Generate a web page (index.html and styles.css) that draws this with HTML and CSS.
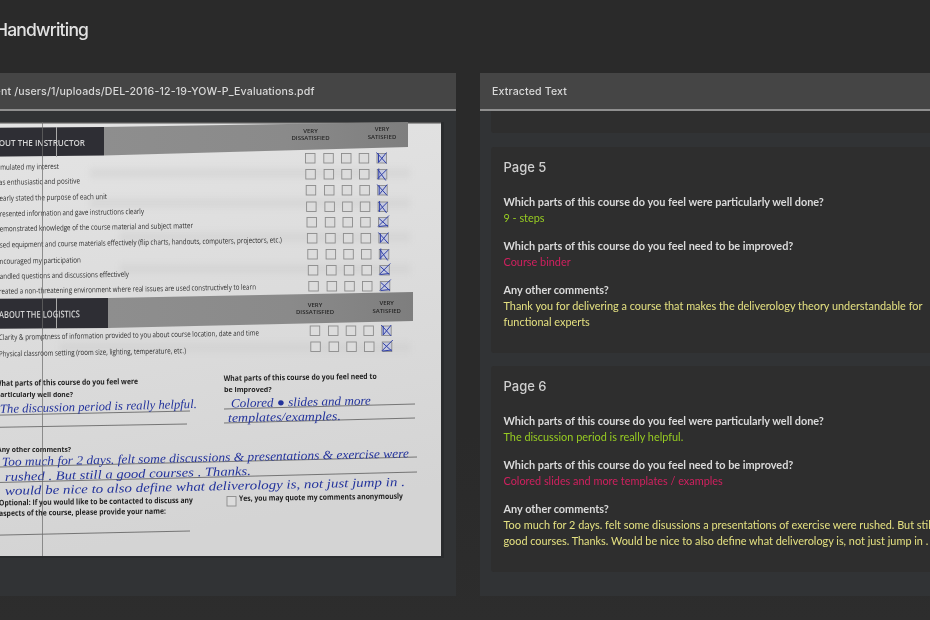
FILE: index.html
```html
<!DOCTYPE html>
<html lang="en">
<head>
  <meta charset="UTF-8">
  <title>Handwriting</title>
  <link rel="stylesheet" href="styles.css">
</head>
<body>
  <div class="page">
    <h1>Handwriting</h1>

    <div class="panels">
      <section class="panel">
        <div class="panel-head">Document /users/1/uploads/DEL-2016-12-19-YOW-P_Evaluations.pdf</div>
        <div class="panel-body scan-wrap">
          <svg class="scan" width="486" height="436" viewBox="-42 122 486 436" xmlns="http://www.w3.org/2000/svg">
            <defs>
              <linearGradient id="paper" x1="0" y1="0" x2="0.2" y2="1">
                <stop offset="0" stop-color="#e4e4e4"/>
                <stop offset="0.5" stop-color="#dcdcdc"/>
                <stop offset="1" stop-color="#d4d4d4"/>
              </linearGradient>
              <linearGradient id="bar" x1="0" y1="0" x2="1" y2="0">
                <stop offset="0" stop-color="#8e8e8e"/>
                <stop offset="0.6" stop-color="#8a8a8a"/>
                <stop offset="1" stop-color="#7e7e7e"/>
              </linearGradient>
              <filter id="soft"><feGaussianBlur stdDeviation="2.5"/></filter>
              <g id="boxes">
                <rect class="box" x="0" y="0" width="9.5" height="9.5"/>
                <rect class="box" x="18.3" y="0" width="9.5" height="9.5"/>
                <rect class="box" x="36" y="0" width="9.5" height="9.5"/>
                <rect class="box" x="53.7" y="0" width="9.5" height="9.5"/>
                <rect class="box ticked" x="71.5" y="0" width="9.5" height="9.5"/>
              </g>
              <path id="tick-a" d="M71 -1 L81 10 M81 -1 L73 9 M73 0 L73 9"/>
              <path id="tick-b" d="M72 0 L80 11 M81 0 L72 9 M73 -1 L73 10"/>
              <path id="tick-c" d="M71 9 L82 -2 M72 1 L81 9 M72 9 L81 8"/>
            </defs>

            <rect x="-42" y="122" width="486" height="436" fill="#2a2c2e"/>
            <rect x="-42" y="122" width="483" height="434" fill="url(#paper)"/>
            <rect x="-42" y="122" width="483" height="1.5" fill="#555"/>

            <g class="bleed" filter="url(#soft)">
              <rect x="90" y="168" width="320" height="10"/>
              <rect x="90" y="198" width="320" height="10"/>
              <rect x="120" y="232" width="290" height="10"/>
              <rect x="120" y="264" width="290" height="10"/>
              <rect x="60" y="343" width="350" height="9"/>
            </g>

            <!-- section bars -->
            <polygon points="-42,128 104,127 104,155.5 -42,157" fill="#2e2e34"/>
            <polygon points="104,127 408,122 408,147 104,155.5" fill="url(#bar)"/>
            <polygon points="-42,299 108,298 108,328 -42,329" fill="#2e2e34"/>
            <polygon points="108,298 413,292 413,321 108,328" fill="url(#bar)"/>
            <line class="fold-light" x1="56.5" y1="127" x2="56.5" y2="157"/>
            <line class="fold-light" x1="56.5" y1="298" x2="56.5" y2="329"/>

            <text class="bar-title" x="-12" y="146" textLength="97" lengthAdjust="spacingAndGlyphs">ABOUT THE INSTRUCTOR</text>
            <text class="bar-title" x="-1" y="318" textLength="81" lengthAdjust="spacingAndGlyphs" transform="rotate(-0.5 0 318)">ABOUT THE LOGISTICS</text>

            <text class="bar-label" x="310.5" y="132.5">VERY</text>
            <text class="bar-label" x="310.5" y="139.5">DISSATISFIED</text>
            <text class="bar-label" x="382" y="130.5">VERY</text>
            <text class="bar-label" x="382" y="138.5">SATISFIED</text>
            <text class="bar-label" x="315" y="306.5">VERY</text>
            <text class="bar-label" x="315" y="314">DISSATISFIED</text>
            <text class="bar-label" x="386.7" y="305">VERY</text>
            <text class="bar-label" x="386.7" y="312.5">SATISFIED</text>

            <!-- rating rows -->
            <g class="row-text">
              <text x="-7" y="170" textLength="66" lengthAdjust="spacingAndGlyphs" transform="rotate(-1 -7 170)">Stimulated my interest</text>
              <text x="-6" y="185" textLength="86" lengthAdjust="spacingAndGlyphs" transform="rotate(-1 -6 185)">was enthusiastic and positive</text>
              <text x="-5" y="201" textLength="112" lengthAdjust="spacingAndGlyphs" transform="rotate(-1 -5 201)">clearly stated the purpose of each unit</text>
              <text x="-4" y="216.5" textLength="148" lengthAdjust="spacingAndGlyphs" transform="rotate(-1 -4 216.5)">presented information and gave instructions clearly</text>
              <text x="-4" y="231.5" textLength="197" lengthAdjust="spacingAndGlyphs" transform="rotate(-1 -4 231.5)">demonstrated knowledge of the course material and subject matter</text>
              <text x="-4" y="247.5" textLength="286" lengthAdjust="spacingAndGlyphs" transform="rotate(-1 -4 247.5)">used equipment and course materials effectively (flip charts, handouts, computers, projectors, etc.)</text>
              <text x="-4" y="264" textLength="85" lengthAdjust="spacingAndGlyphs" transform="rotate(-1 -4 264)">encouraged my participation</text>
              <text x="-4" y="279" textLength="133" lengthAdjust="spacingAndGlyphs" transform="rotate(-1 -4 279)">handled questions and discussions effectively</text>
              <text x="-4" y="294" textLength="260" lengthAdjust="spacingAndGlyphs" transform="rotate(-1 -4 294)">created a non-threatening environment where real issues are used constructively to learn</text>
              <text x="-1" y="340" textLength="260" lengthAdjust="spacingAndGlyphs" transform="rotate(-1 -1 340)">Clarity &amp; promptness of information provided to you about course location, date and time</text>
              <text x="-1" y="356.5" textLength="187" lengthAdjust="spacingAndGlyphs" transform="rotate(-1 -1 356.5)">Physical classroom setting (room size, lighting, temperature, etc.)</text>
            </g>

            <use href="#boxes" x="305.5" y="153.5"/>
            <use href="#boxes" x="305.8" y="169.5"/>
            <use href="#boxes" x="306.2" y="185.5"/>
            <use href="#boxes" x="306.6" y="202"/>
            <use href="#boxes" x="307" y="217.5"/>
            <use href="#boxes" x="307.4" y="233.5"/>
            <use href="#boxes" x="307.8" y="249.5"/>
            <use href="#boxes" x="308.3" y="265.5"/>
            <use href="#boxes" x="308.8" y="281.5"/>
            <use href="#boxes" x="310.2" y="326"/>
            <use href="#boxes" x="310.8" y="342"/>
            <g class="ticks">
              <use href="#tick-a" x="305.5" y="153.5"/>
              <use href="#tick-b" x="305.8" y="169.5"/>
              <use href="#tick-a" x="306.2" y="185.5"/>
              <use href="#tick-b" x="306.6" y="202"/>
              <use href="#tick-c" x="307" y="217.5"/>
              <use href="#tick-a" x="307.4" y="233.5"/>
              <use href="#tick-b" x="307.8" y="249.5"/>
              <use href="#tick-c" x="308.3" y="265.5"/>
              <use href="#tick-c" x="308.8" y="281.5"/>
              <use href="#tick-a" x="310.2" y="326"/>
              <use href="#tick-c" x="310.8" y="342"/>
            </g>

            <!-- written questions -->
            <g class="question">
              <text x="-5" y="386" textLength="143" lengthAdjust="spacingAndGlyphs" transform="rotate(-0.8 -5 386)">What parts of this course do you feel were</text>
              <text x="-4" y="396.5" textLength="77" lengthAdjust="spacingAndGlyphs">particularly well done?</text>
              <text x="223.7" y="381" textLength="153" lengthAdjust="spacingAndGlyphs" transform="rotate(-0.8 223.7 381)">What parts of this course do you feel need to</text>
              <text x="224" y="391.5" textLength="47.7" lengthAdjust="spacingAndGlyphs">be improved?</text>
              <text x="-3" y="451.5" textLength="74" lengthAdjust="spacingAndGlyphs">Any other comments?</text>
              <text x="-1" y="505.5" textLength="194" lengthAdjust="spacingAndGlyphs" transform="rotate(-0.8 -1 505.5)">Optional: If you would like to be contacted to discuss any</text>
              <text x="-1" y="516" textLength="167" lengthAdjust="spacingAndGlyphs" transform="rotate(-0.8 -1 516)">aspects of the course, please provide your name:</text>
              <text x="239" y="501" textLength="164" lengthAdjust="spacingAndGlyphs" transform="rotate(-0.8 239 501)">Yes, you may quote my comments anonymously</text>
            </g>
            <rect class="box" x="227" y="496.5" width="9" height="9.5"/>

            <g class="rules">
              <line x1="-42" y1="416" x2="190" y2="411"/>
              <line x1="-42" y1="428" x2="187" y2="424"/>
              <line x1="224" y1="409" x2="415" y2="404"/>
              <line x1="224" y1="423" x2="415" y2="418"/>
              <line x1="-42" y1="468" x2="417" y2="457"/>
              <line x1="-42" y1="483.5" x2="417" y2="472"/>
              <line x1="-42" y1="536" x2="190" y2="531"/>
            </g>

            <g class="hand">
              <text x="0" y="413" textLength="197" lengthAdjust="spacingAndGlyphs" transform="rotate(-1.5 0 413)">The discussion period is really helpful.</text>
              <text x="231" y="407.5" textLength="140" lengthAdjust="spacingAndGlyphs" transform="rotate(-1.2 231 407.5)">Colored ● slides and more</text>
              <text x="228" y="422" textLength="113" lengthAdjust="spacingAndGlyphs" transform="rotate(-1 228 422)">templates/examples.</text>
              <text x="2" y="466" textLength="407" lengthAdjust="spacingAndGlyphs" transform="rotate(-1.2 2 466)">Too much for 2 days. felt some discussions &amp; presentations &amp; exercise were</text>
              <text x="5" y="481" textLength="246" lengthAdjust="spacingAndGlyphs" transform="rotate(-1.4 5 481)">rushed . But still a good courses . Thanks.</text>
              <text x="5" y="495" textLength="400" lengthAdjust="spacingAndGlyphs" transform="rotate(-1.3 5 495)">would be nice to also define what deliverology is, not just jump in .</text>
            </g>

            <line class="fold-dark" x1="42.5" y1="122" x2="42.5" y2="556"/>
          </svg>
        </div>
      </section>

      <section class="panel">
        <div class="panel-head">Extracted Text</div>
        <div class="panel-body results">
          <div class="result-card cut-off"></div>

          <div class="result-card">
            <h2>Page 5</h2>
            <div class="qa">
              <p class="q">Which parts of this course do you feel were particularly well done?</p>
              <p class="a good">9 - steps</p>
            </div>
            <div class="qa">
              <p class="q">Which parts of this course do you feel need to be improved?</p>
              <p class="a bad">Course binder</p>
            </div>
            <div class="qa">
              <p class="q">Any other comments?</p>
              <p class="a other">Thank you for delivering a course that makes the deliverology theory understandable for functional experts</p>
            </div>
          </div>

          <div class="result-card">
            <h2>Page 6</h2>
            <div class="qa">
              <p class="q">Which parts of this course do you feel were particularly well done?</p>
              <p class="a good">The discussion period is really helpful.</p>
            </div>
            <div class="qa">
              <p class="q">Which parts of this course do you feel need to be improved?</p>
              <p class="a bad">Colored slides and more templates / examples</p>
            </div>
            <div class="qa">
              <p class="q">Any other comments?</p>
              <p class="a other">Too much for 2 days. felt some disussions a presentations of exercise were rushed. But still a good courses. Thanks. Would be nice to also define what deliverology is, not just jump in .</p>
            </div>
          </div>
        </div>
      </section>
    </div>
  </div>
</body>
</html>
```

FILE: styles.css
```css
html, body {
  margin: 0;
  padding: 0;
  height: 100%;
  overflow: hidden;
  background: linear-gradient(#2a2a2a, #2a2a2a 70%, #2d2d2d);
}

/* the shot is cropped on both sides, so the page runs wider than the window */
.page {
  width: 1044px;
  margin-left: -54px;
  font-family: "Lato", sans-serif;
  filter: blur(0.35px);
}

h1 {
  margin: 0;
  height: 73px;
  padding: 19px 0 0 49px;
  box-sizing: border-box;
  font-family: "Inter", sans-serif;
  font-size: 17.5px;
  font-weight: 500;
  line-height: 22px;
  letter-spacing: -0.8px;
  color: #e2e2e2;
}

.panels {
  display: grid;
  grid-template-columns: 510px 510px;
  gap: 24px;
}

.panel {
  height: 523px;
  background: #313335;
  overflow: hidden;
}

.panel-head {
  height: 35px;
  padding: 1px 12px 0;
  line-height: 36px;
  background: #454545;
  border-bottom: 2px solid #8f8f8f;
  font-family: "Inter", sans-serif;
  font-size: 10.6px;
  font-weight: 500;
  letter-spacing: 0.13px;
  color: #d8d8d8;
}

.scan-wrap {
  padding: 11px 12px;
}

.scan {
  display: block;
}

.bleed rect {
  fill: #c6c6c6;
  opacity: 0.3;
}

.fold-light {
  stroke: #a8a8a8;
  stroke-width: 1;
}

.fold-dark {
  stroke: #6a6a6a;
  stroke-width: 0.7;
}

.bar-title {
  font-family: "Open Sans", sans-serif;
  font-size: 9.5px;
  font-weight: 600;
  fill: #d4d4d4;
}

.bar-label {
  font-family: "Open Sans", sans-serif;
  font-size: 6px;
  font-weight: 600;
  fill: #262626;
  text-anchor: middle;
}

.row-text text {
  font-family: "Open Sans", sans-serif;
  font-size: 7.6px;
  fill: #2e2e2e;
}

.box {
  fill: #dcdcdc;
  stroke: #8c8c8c;
  stroke-width: 0.9;
}

.ticked {
  fill: #c6cade;
}

.ticks {
  fill: none;
  stroke: #2f3fa8;
  stroke-width: 1;
}

.question text {
  font-family: "Open Sans", sans-serif;
  font-size: 7.8px;
  font-weight: 700;
  fill: #222222;
}

.rules line {
  stroke: #5c5c5c;
  stroke-width: 0.8;
}

.hand text {
  font-family: "Liberation Serif", serif;
  font-style: italic;
  font-size: 12.5px;
  fill: #23339c;
}

.results {
  padding: 0 11px;
}

.result-card {
  width: 488px;
  height: 206px;
  margin-bottom: 13px;
  padding: 12px 12.5px;
  box-sizing: border-box;
  background: #2e2e2e;
  border-radius: 3px;
}

.result-card.cut-off {
  height: 22px;
  padding: 0;
  margin-bottom: 14px;
  border-radius: 0 0 3px 3px;
}

h2 {
  margin: 0 0 18px;
  font-family: "Inter", sans-serif;
  font-size: 13px;
  font-weight: 500;
  line-height: 17px;
  color: #cfcfcf;
}

.qa {
  margin-bottom: 12px;
}

.qa p {
  margin: 0;
  font-size: 10.88px;
  line-height: 16px;
}

.q {
  font-weight: 700;
  color: #dadada;
}

.good {
  color: #97cc22;
}

.bad {
  color: #d0205f;
}

.other {
  color: #e4e080;
}
```
